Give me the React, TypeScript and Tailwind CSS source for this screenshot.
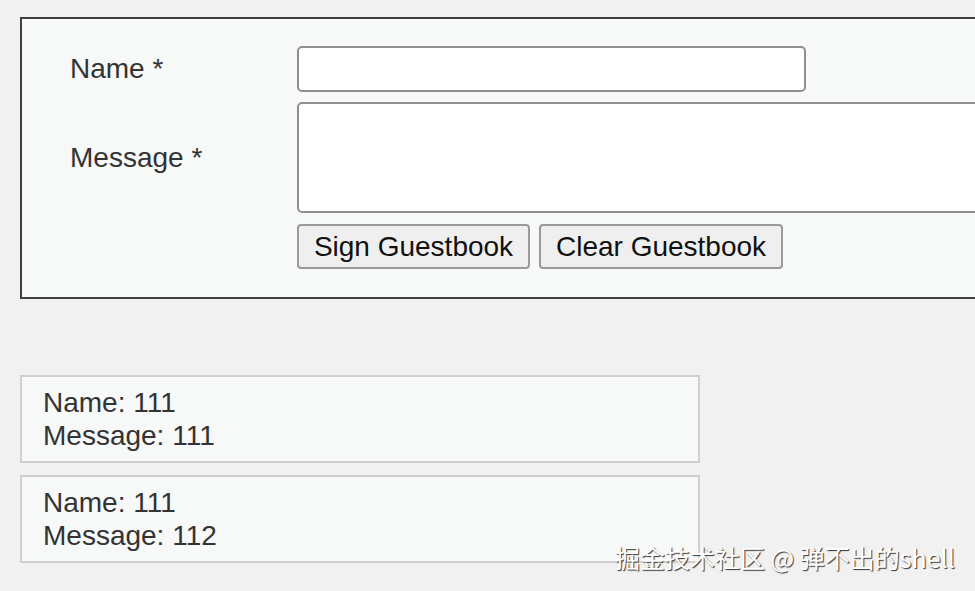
import React from 'react';

// guestbook entries shown under the form
const entries = [
  { name: '111', message: '111' },
  { name: '111', message: '112' },
];

const font = { fontFamily: '"Liberation Sans", Arial, sans-serif' };

export default function App() {
  return (
    <div
      className="relative h-[591px] w-full overflow-hidden bg-[#f1f1f1] pt-[17px] pl-[20px]"
      style={font}>
      {/* FORM */}
      <form className="w-[1100px] border-2 border-[#404040] bg-[#f7f8f8] pt-[27px] pb-[28px] pl-[48px]">
        <div className="flex">
          <div className="flex w-[227px] flex-col text-[28px] text-[#333]">
            <label className="flex h-[46px] items-center">Name *</label>
            <label className="mt-[10px] flex h-[111px] items-center">Message *</label>
          </div>
          <div className="flex flex-col">
            <input
              type="text"
              className="h-[46px] w-[509px] rounded-[5px] border-2 border-[#8f8f8f] bg-white"
            />
            <textarea className="mt-[10px] h-[111px] w-[800px] resize-none rounded-[5px] border-2 border-[#8f8f8f] bg-white" />
            <div className="mt-[11px] flex gap-[9px]">
              <button
                type="button"
                className="h-[45px] w-[233px] rounded-[4px] border-2 border-[#9a9a9a] bg-[#efefef] text-[28px] text-[#111]">
                Sign Guestbook
              </button>
              <button
                type="button"
                className="h-[45px] w-[244px] rounded-[4px] border-2 border-[#9a9a9a] bg-[#efefef] text-[28px] text-[#111]">
                Clear Guestbook
              </button>
            </div>
          </div>
        </div>
      </form>

      {/* ENTRIES */}
      <ul className="mt-[76px] flex w-[680px] flex-col gap-[12px]">
        {entries.map((e, i) => (
          <li
            key={i}
            className="border-2 border-[#cfcfcf] bg-[#f7f8f8] pt-[9px] pb-[9px] pl-[21px] text-[28px] leading-[33px] text-[#333]">
            <div>Name: {e.name}</div>
            <div>Message: {e.message}</div>
          </li>
        ))}
      </ul>

      {/* watermark */}
      <div
        className="absolute top-[539px] left-[615px] text-[25px] leading-[37px] text-white [text-shadow:1px_1px_1px_#333]"
        style={{ fontFamily: '"Noto Sans CJK SC", "Noto Sans", sans-serif' }}>
        掘金技术社区 @ 弹不出的shell
      </div>
    </div>
  );
}
